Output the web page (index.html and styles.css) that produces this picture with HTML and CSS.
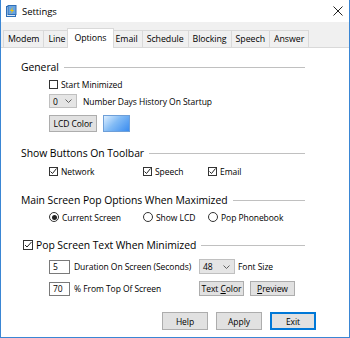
FILE: index.html
```html
<!DOCTYPE html>
<html lang="en">
<head>
    <meta charset="UTF-8">
    <title>Settings</title>
    <link rel="stylesheet" href="styles.css">
</head>
<body>
    <div class="window">
        <!-- Title bar -->
        <div class="titlebar">
            <svg class="app-icon" width="11" height="12" viewBox="0 0 11 12">
                <rect x="0.5" y="1.5" width="9" height="10" fill="#dbe9f7" stroke="#2f6fb7"/>
                <rect x="2" y="0.5" width="8" height="9" fill="#6aa5e0" stroke="#2f6fb7"/>
                <path d="M7 2 L4 6 L6 6 L4.5 9 L8 5 L6 5 Z" fill="#f5c400"/>
            </svg>
            <span class="title">Settings</span>
            <svg class="close" width="10" height="10" viewBox="0 0 10 10">
                <path d="M0.5 0.5 L9.5 9.5 M9.5 0.5 L0.5 9.5" stroke="#222" stroke-width="1"/>
            </svg>
        </div>

        <!-- Tabs -->
        <div class="tabs">
            <span class="tab">Modem</span>
            <span class="tab">Line</span>
            <span class="tab active">Options</span>
            <span class="tab">Email</span>
            <span class="tab">Schedule</span>
            <span class="tab">Blocking</span>
            <span class="tab">Speech</span>
            <span class="tab">Answer</span>
        </div>

        <!-- Options page -->
        <div class="panel">
            <div class="group-head"><span class="group-title">General</span></div>
            <div class="row row-start">
                <span class="check"><span class="box"></span>Start Minimized</span>
            </div>
            <div class="row row-days">
                <span class="combo combo-days">0<svg class="chev" width="7" height="4" viewBox="0 0 7 4"><path d="M0.5 0.5 L3.5 3.5 L6.5 0.5" fill="none" stroke="#606060"/></svg></span>
                <span>Number Days History On Startup</span>
            </div>
            <div class="row row-lcd">
                <button class="btn btn-lcd">LCD Color</button>
                <span class="swatch"></span>
            </div>

            <div class="group-head head-toolbar"><span class="group-title">Show Buttons On Toolbar</span></div>
            <div class="row row-toolbar">
                <span class="check"><span class="box checked"><svg width="9" height="9" viewBox="0 0 9 9"><path d="M1.5 4.5 L3.5 6.5 L7.5 1.5" fill="none" stroke="#222" stroke-width="1"/></svg></span>Network</span>
                <span class="check"><span class="box checked"><svg width="9" height="9" viewBox="0 0 9 9"><path d="M1.5 4.5 L3.5 6.5 L7.5 1.5" fill="none" stroke="#222" stroke-width="1"/></svg></span>Speech</span>
                <span class="check"><span class="box checked"><svg width="9" height="9" viewBox="0 0 9 9"><path d="M1.5 4.5 L3.5 6.5 L7.5 1.5" fill="none" stroke="#222" stroke-width="1"/></svg></span>Email</span>
            </div>

            <div class="group-head head-pop"><span class="group-title">Main Screen Pop Options When Maximized</span></div>
            <div class="row row-toolbar row-radio">
                <span class="check"><span class="radio on"></span>Current Screen</span>
                <span class="check"><span class="radio"></span>Show LCD</span>
                <span class="check"><span class="radio"></span>Pop Phonebook</span>
            </div>

            <div class="group-head head-text">
                <span class="group-title"><span class="box checked big"><svg width="10" height="10" viewBox="0 0 10 10"><path d="M2 5 L4 7 L8.5 2" fill="none" stroke="#222" stroke-width="1"/></svg></span>Pop Screen Text When Minimized</span>
            </div>
            <div class="grid-text">
                <span class="field">5</span>
                <span>Duration On Screen (Seconds)</span>
                <span class="combo combo-size">48<svg class="chev" width="7" height="4" viewBox="0 0 7 4"><path d="M0.5 0.5 L3.5 3.5 L6.5 0.5" fill="none" stroke="#606060"/></svg></span>
                <span class="font-label">Font Size</span>

                <span class="field">70</span>
                <span>% From Top Of Screen</span>
                <span class="btn-pair">
                    <button class="btn btn-small"><span>Text <u>C</u>olor</span></button>
                    <button class="btn btn-small"><span><u>P</u>review</span></button>
                </span>
            </div>

            <div class="actions">
                <button class="btn btn-main">Help</button>
                <button class="btn btn-main">Apply</button>
                <button class="btn btn-main default">Exit</button>
            </div>
        </div>
    </div>
</body>
</html>
```

FILE: styles.css
```css
/* Base */
* {
    margin: 0;
    padding: 0;
    box-sizing: border-box;
}

body {
    font-family: 'Open Sans', 'Noto Sans', sans-serif;
    font-size: 8.5px;
    letter-spacing: -0.05px;
    color: #000000;
    background: #ffffff;
    overflow: hidden;
    white-space: nowrap;
}

.window {
    width: 350px;
    height: 338px;
    display: flex;
    flex-direction: column;
    border: 1px solid #3a86d4;
    border-top: none;
    background: #ffffff;
}

/* Title bar */
.titlebar {
    height: 22px;
    display: flex;
    align-items: center;
    padding: 0 5px 0 5px;
    background: #ffffff;
}

.app-icon {
    margin-right: 5px;
}

.title {
    font-size: 9.5px;
    flex: 1;
}

.close {
    margin-right: 1px;
}

/* Tabs */
.tabs {
    height: 26px;
    display: flex;
    align-items: flex-end;
    padding-left: 2px;
    background: #f0f0f0;
    border-bottom: 1px solid #d9d9d9;
}

.tab {
    height: 17px;
    padding: 0 4px;
    display: flex;
    align-items: center;
    background: #f0f0f0;
    border: 1px solid #d9d9d9;
    border-bottom: none;
    margin-right: -1px;
    font-size: 8.8px;
}

.tab.active {
    height: 20px;
    margin: 0 -3px -1px -2px;
    padding: 0 6px 2px 6px;
    background: #ffffff;
    position: relative;
    z-index: 1;
}

/* Page */
.panel {
    flex: 1;
    display: flex;
    flex-direction: column;
    padding: 12px 44px 0 20px;
    background: #ffffff;
}

.group-head {
    height: 14px;
    display: flex;
    align-items: center;
}

.group-head::after {
    content: "";
    flex: 1;
    height: 1px;
    background: #c0c0c0;
    margin-left: 5px;
}

.group-title {
    font-size: 10.4px;
    display: flex;
    align-items: center;
}

.head-toolbar { margin-top: 14px; }
.head-pop { margin-top: 16px; }
.head-text { margin-top: 15px; }

.row {
    display: flex;
    align-items: center;
    gap: 6px;
    padding-left: 28px;
}

.row-start { height: 12px; margin-top: 4px; }
.row-days { height: 14px; margin-top: 4px; }
.row-lcd { height: 17px; margin-top: 7px; }

.row-toolbar {
    height: 12px;
    margin-top: 5px;
    display: grid;
    grid-template-columns: 94px 65px auto;
    gap: 0;
}

.row-radio { margin-top: 4px; }

/* Check boxes and radios */
.check {
    display: flex;
    align-items: center;
}

.box {
    width: 9px;
    height: 9px;
    border: 1px solid #333333;
    background: #ffffff;
    margin-right: 3px;
    display: flex;
    align-items: center;
    justify-content: center;
}

.box svg {
    flex: none;
}

.box.big {
    width: 10px;
    height: 10px;
    margin-left: 2px;
}

.radio {
    width: 10px;
    height: 10px;
    border: 1px solid #333333;
    border-radius: 50%;
    margin-right: 3px;
    display: flex;
    align-items: center;
    justify-content: center;
}

.radio.on::after {
    content: "";
    width: 5px;
    height: 5px;
    border-radius: 50%;
    background: #222222;
}

/* Inputs */
.combo {
    height: 14px;
    display: flex;
    align-items: center;
    justify-content: space-between;
    padding: 0 4px 0 3px;
    background: #e5e5e5;
    border: 1px solid #c0c0c0;
}

.combo-days {
    width: 28px;
}

.combo-size {
    width: 36px;
    height: 15px;
}

.field {
    width: 21px;
    height: 14px;
    border: 1px solid #7a7a7a;
    padding-left: 3px;
    display: flex;
    align-items: center;
}

.swatch {
    width: 27px;
    height: 17px;
    border: 1px solid #6e9fd8;
    background: linear-gradient(135deg, #dceeff 0%, #82bbf5 45%, #3a8cf0 100%);
}

/* Buttons */
.btn {
    font-family: inherit;
    font-size: 8.5px;
    letter-spacing: inherit;
    color: #000000;
    background: #e1e1e1;
    border: 1px solid #adadad;
    display: flex;
    align-items: center;
    justify-content: center;
}

.btn-lcd {
    width: 48px;
    height: 17px;
}

.grid-text {
    display: grid;
    grid-template-columns: 21px 121px 36px auto;
    grid-template-rows: 15px 15px;
    column-gap: 4px;
    row-gap: 7px;
    align-items: center;
    padding-left: 28px;
    margin-top: 7px;
}

.font-label {
    margin-left: -1px;
}

.btn-pair {
    grid-column: 3 / 5;
    display: flex;
    gap: 6px;
}

.btn-small {
    width: 45px;
    height: 15px;
}

.actions {
    display: flex;
    justify-content: flex-end;
    gap: 8px;
    margin: 16px -11px 0 0;
}

.btn-main {
    width: 46px;
    height: 18px;
}

.btn-main.default {
    border: 2px solid #0078d7;
}
```
